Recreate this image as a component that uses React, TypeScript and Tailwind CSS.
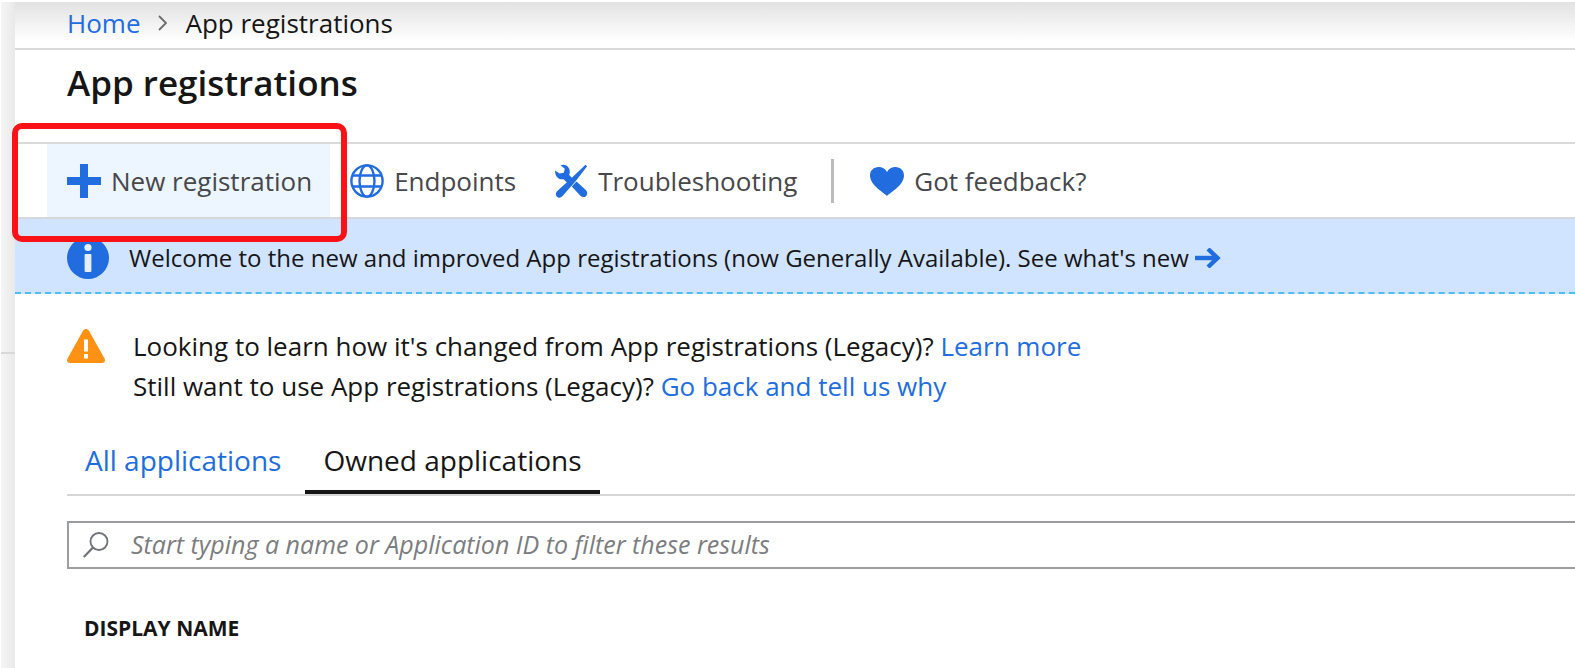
import React from "react";

function PlusIcon() {
  return (
    <svg className="size-[34px] shrink-0" viewBox="0 0 34 34" fill="#216ddf" aria-hidden="true">
      <path d="M13 0h8v13h13v8H21v13h-8V21H0v-8h13z" />
    </svg>
  );
}

function GlobeIcon() {
  return (
    <svg className="size-[34px] shrink-0" viewBox="0 0 34 34" fill="none" stroke="#216ddf" strokeWidth="2.400" aria-hidden="true">
      <circle cx="17" cy="17" r="15.600" />
      <ellipse cx="17" cy="17" rx="7.500" ry="15.600" />
      <path d="M2.300 11.500h29.400M2.300 22.500h29.400" />
    </svg>
  );
}

function ToolsIcon() {
  return (
    <svg className="size-[34px] shrink-0" viewBox="0 0 34 34" fill="#216ddf" aria-hidden="true">
      <path d="M6.500 1.300C11-.8 15.800 2.500 15.800 7.500c0 1.400-.2 2.400-.6 3.400l3.200 3.400-5 4.700-3.800-3.800C5 16.200 0.500 12 1.200 6.500L5.500 9.600l4.300-.9 1-3.900z" />
      <path d="M31.500.7l1.600 1.500L21.400 17.600 8.500 32c-1.800 2-4 2.200-5.600.7-1.600-1.600-1.400-3.800.4-5.600L17 14.500z" />
      <path d="M22.500 17.500l9.300 8.600c1.900 1.900 1.800 4.300.4 5.800-1.600 1.600-4 1.600-5.800-.1L17.800 22.500z" />
    </svg>
  );
}

function HeartIcon() {
  return (
    <svg className="size-[34px] shrink-0" viewBox="0 0 34 34" fill="#216ddf" aria-hidden="true">
      <path d="M17 32C14 28.500 0 21.500 0 11.500 0 6.500 3.800 3 8.500 3c3.700 0 6.800 1.800 8.500 5 1.700-3.200 4.800-5 8.500-5C30.200 3 34 6.500 34 11.500 34 21.500 20 28.500 17 32z" />
    </svg>
  );
}

function InfoIcon() {
  return (
    <svg className="size-[42px] shrink-0" viewBox="0 0 42 42" aria-hidden="true">
      <circle cx="21" cy="21" r="21" fill="#216ddf" />
      <circle cx="21" cy="10.500" r="3.600" fill="#e4eefc" />
      <rect x="17.600" y="17" width="6.800" height="18" rx="1" fill="#e4eefc" />
    </svg>
  );
}

function WarningIcon() {
  return (
    <svg className="h-[34px] w-[38px] shrink-0" viewBox="0 0 38 34" aria-hidden="true">
      <path d="M16 1.800c1.500-2.400 4.500-2.400 6 0l15.500 27.700c1.200 2.300 0 4.500-2.500 4.500H3c-2.500 0-3.700-2.200-2.500-4.500z" fill="#ff9212" />
      <path d="M17 10.500h4v12h-4zM17 25h4v4.500h-4z" fill="#fff" />
    </svg>
  );
}

function ArrowIcon() {
  return (
    <svg className="h-5 w-[26px] shrink-0" viewBox="0 0 26 20" fill="none" stroke="#216ddf" strokeWidth="4.400" aria-hidden="true">
      <path d="M0 10h22" />
      <path d="M13 1l9.500 9-9.500 9" />
    </svg>
  );
}

function SearchIcon() {
  return (
    <svg className="size-[26px] shrink-0" viewBox="0 0 26 26" fill="none" stroke="#6f7278" strokeWidth="1.800" aria-hidden="true">
      <circle cx="16" cy="9.500" r="8.500" />
      <path d="M10 15.500L.8 25" strokeWidth="2.200" />
    </svg>
  );
}

function Chevron() {
  return (
    <svg className="h-4 w-[9px] shrink-0" viewBox="0 0 9 16" fill="none" stroke="#6b6b6b" strokeWidth="1.800" aria-hidden="true">
      <path d="M1 1l7 7-7 7" />
    </svg>
  );
}

const actionClass = "flex h-full items-center gap-2.5 pt-px pr-[18px] pl-5 whitespace-nowrap";

export default function App() {
  return (
    <div className="flex min-h-screen overflow-hidden bg-white pt-0.5 pl-px font-['Open_Sans','Noto_Sans',sans-serif] text-[26px] text-[#161616]">
      <aside className="w-3.5 shrink-0 bg-linear-to-r from-[#f5f5f5] to-[#e9e9e9]">
        <div className="mt-[350px] h-0.5 bg-[#d8d8d8]" />
      </aside>
      <main className="min-w-0 flex-1">
        <nav aria-label="Breadcrumb" className="flex h-12 items-center gap-[18px] border-b-2 border-[#d9d9d9] bg-linear-to-b from-[#e2e2e2] to-white to-85% pb-1 pl-[52px]">
          <a href="#home" className="text-[#216ddf]">Home</a>
          <Chevron />
          <span>App registrations</span>
        </nav>
        <h1 className="h-[94px] border-b-2 border-[#d9d9d9] pt-[9px] pl-[52px] text-[35px] leading-[48px] font-semibold">
          App registrations
        </h1>
        <div role="toolbar" aria-label="Actions" className="relative flex h-[75px] items-center border-b-2 border-[#d5d7da] pl-8 text-[#46484c]">
          <button type="button" className={`${actionClass} bg-[#edf5ff]`}>
            <PlusIcon />
            New registration
          </button>
          <button type="button" className={actionClass}>
            <GlobeIcon />
            Endpoints
          </button>
          <button type="button" className={actionClass}>
            <ToolsIcon />
            Troubleshooting
          </button>
          <div className="mx-4 h-11 w-[3px] bg-[#b9bbbe]" />
          <button type="button" className={actionClass}>
            <HeartIcon />
            Got feedback?
          </button>
          <div className="pointer-events-none absolute -top-[21px] -left-[3px] h-[119px] w-[335px] rounded-[10px] border-6 border-[#fa1216]" />
        </div>
        <a href="#whats-new" className="flex h-[75px] items-center border-b-2 border-dashed border-[#52bdf0] bg-[#d0e3ff] pt-1 pl-[52px] text-2xl whitespace-nowrap">
          <InfoIcon />
          <span className="mr-1.5 ml-5">
            Welcome to the new and improved App registrations (now Generally Available). See what's new
          </span>
          <ArrowIcon />
        </a>
        <section className="flex gap-7 pt-8 pl-[52px] leading-10 whitespace-nowrap">
          <div className="flex h-10 items-center">
            <WarningIcon />
          </div>
          <div>
            <p>
              Looking to learn how it's changed from App registrations (Legacy)?{" "}
              <a href="#learn" className="text-[#216ddf]">Learn more</a>
            </p>
            <p>
              Still want to use App registrations (Legacy)?{" "}
              <a href="#back" className="text-[#216ddf]">Go back and tell us why</a>
            </p>
          </div>
        </section>
        <div role="tablist" className="mt-7 ml-[52px] flex h-[62px] border-b-2 border-[#d6d6d6] text-[28px]">
          <button type="button" role="tab" aria-selected="false" className="border-b-4 border-transparent px-[18px] pb-1 text-[#216ddf]">
            All applications
          </button>
          <button type="button" role="tab" aria-selected="true" className="ml-1.5 border-b-4 border-[#161616] px-[18px] pb-1">
            Owned applications
          </button>
        </div>
        <label className="mt-[25px] ml-[52px] flex h-12 items-center gap-[22px] border-2 border-r-0 border-[#9b9da1] pl-3.5">
          <SearchIcon />
          <input
            type="text"
            aria-label="Filter applications"
            placeholder="Start typing a name or Application ID to filter these results"
            className="min-w-0 flex-1 bg-transparent text-[25px] italic outline-none placeholder:text-[#7b7d80]"
          />
        </label>
        <table className="mt-[43px] ml-[69px]">
          <thead>
            <tr>
              <th scope="col" className="text-left text-[21px] leading-8 font-bold">DISPLAY NAME</th>
            </tr>
          </thead>
        </table>
      </main>
    </div>
  );
}
